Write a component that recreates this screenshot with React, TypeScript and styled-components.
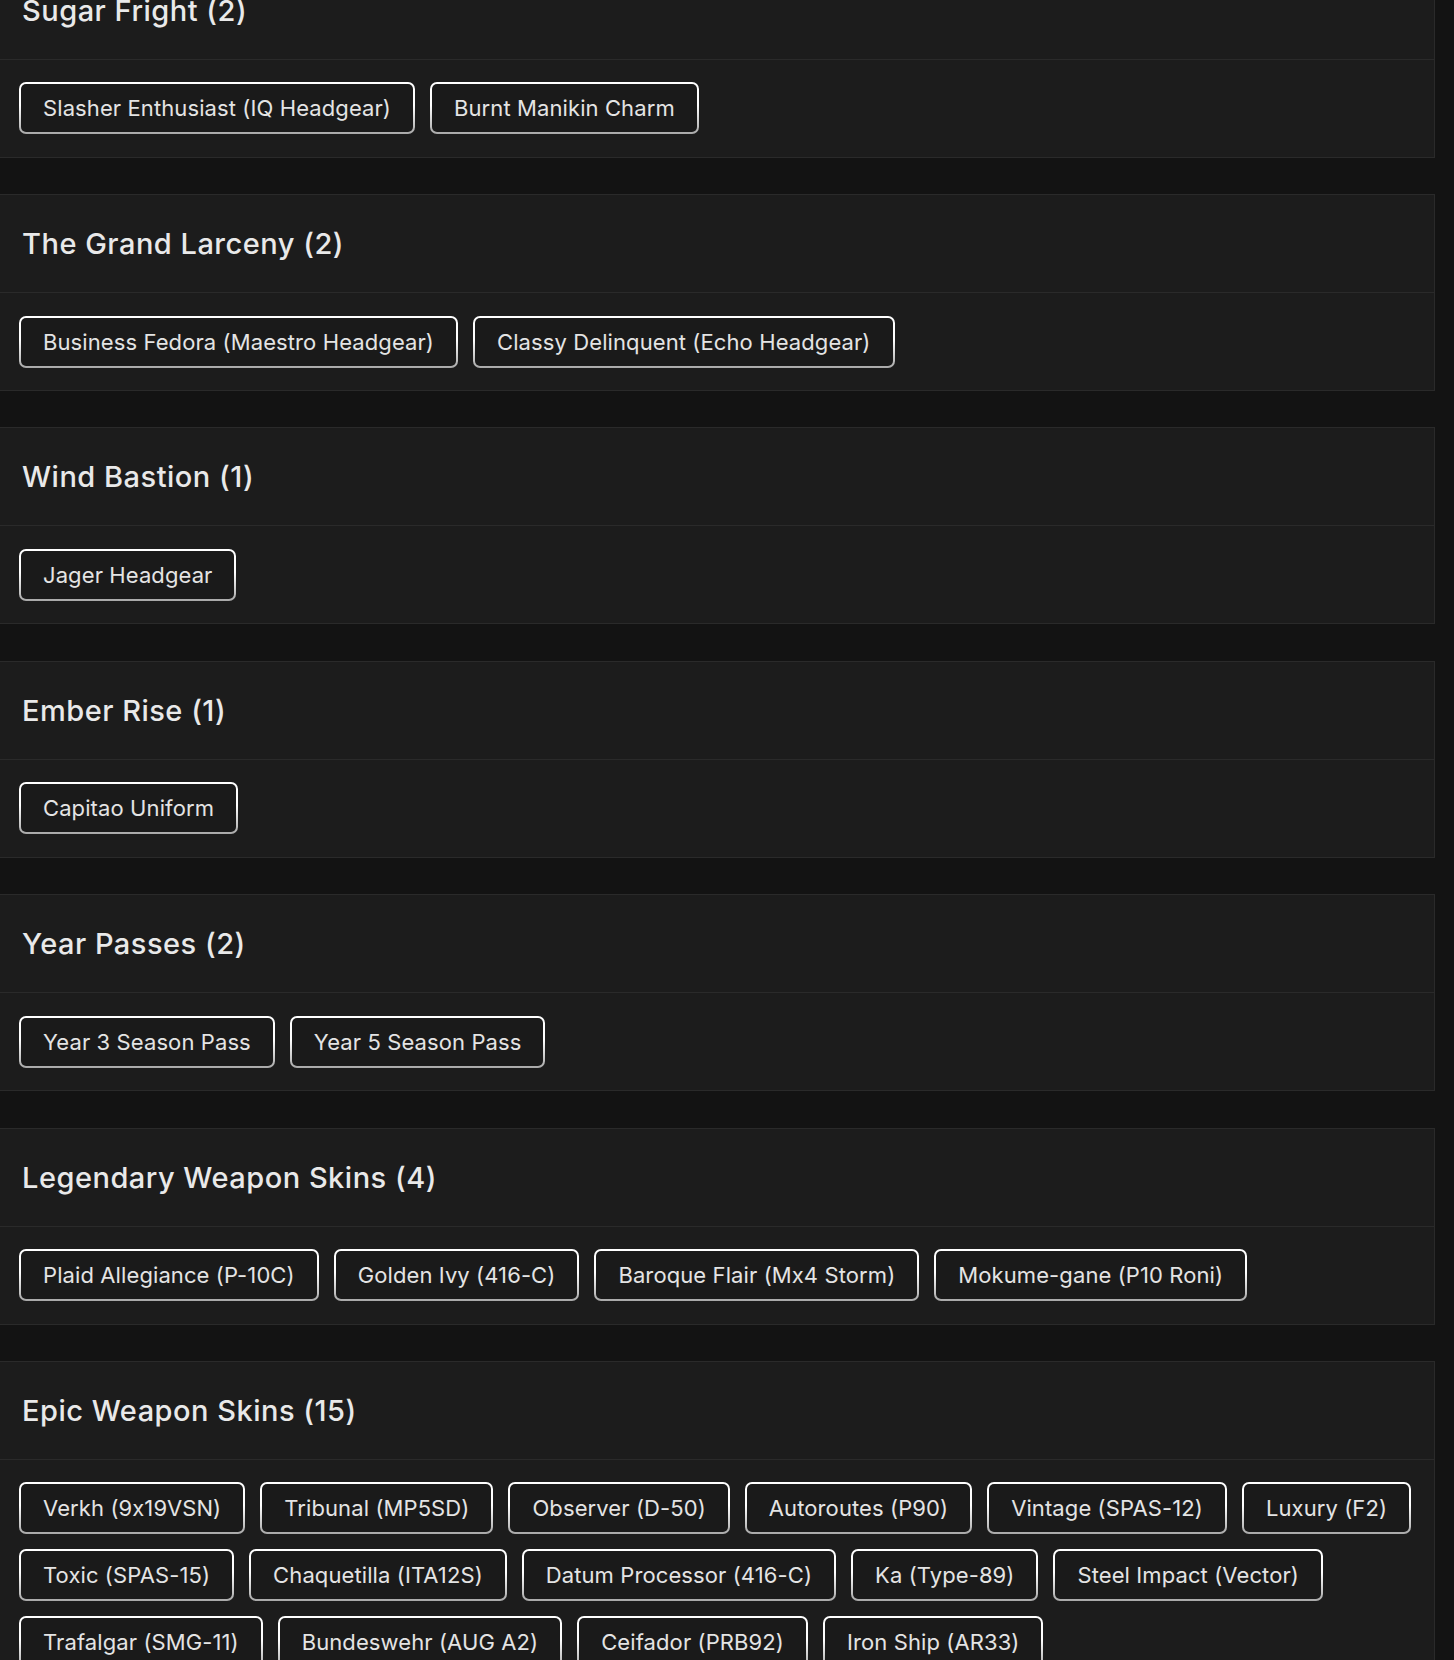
import React from "react";
import styled, { createGlobalStyle } from "styled-components";

const GlobalStyle = createGlobalStyle`
  html, body {
    margin: 0;
    padding: 0;
    background: #131313;
  }
  body {
    font-family: Inter, "Noto Sans", "Liberation Sans", sans-serif;
    color: #e6e6e6;
    overflow: hidden;
  }
  * { box-sizing: border-box; }
`;

const Page = styled.main`
  width: 1454px;
  height: 1660px;
  overflow: hidden;
  background: #131313;
`;

const CardList = styled.div`
  display: flex;
  flex-direction: column;
  gap: 36.4px;
  margin: -39.4px 19.5px 0 -1px;
`;

const Card = styled.section`
  background: #1c1c1c;
  border: 1px solid #2a2a2a;
  display: flex;
  flex-direction: column;
`;

const CardHeader = styled.header`
  height: 98px;
  padding: 0 22px;
  display: flex;
  align-items: center;
  border-bottom: 1px solid #2a2a2a;
`;

const Title = styled.h3`
  margin: 0;
  font-size: 29px;
  font-weight: 500;
  color: #e9e9e9;
  letter-spacing: 0.5px;
`;

const CardBody = styled.div`
  padding: 22.5px 18px 22.5px 19px;
  display: flex;
  flex-wrap: wrap;
  gap: 15px 15px;
`;

const ItemButton = styled.button`
  height: 52px;
  padding: 0 22px;
  border: 2px solid transparent;
  border-radius: 7px;
  background:
    linear-gradient(#1a1a1a, #1a1a1a) padding-box,
    linear-gradient(#ffffff, #ffffff 45%, #a8a8a8) border-box;
  color: #e4e4e4;
  font-family: Inter, "Noto Sans", "Liberation Sans", sans-serif;
  font-size: 22px;
  font-weight: 400;
  letter-spacing: 0.1px;
  line-height: 1;
  cursor: pointer;
  white-space: nowrap;
`;

type Group = { name: string; items: string[] };

const groups: Group[] = [
  { name: "Sugar Fright", items: ["Slasher Enthusiast (IQ Headgear)", "Burnt Manikin Charm"] },
  {
    name: "The Grand Larceny",
    items: ["Business Fedora (Maestro Headgear)", "Classy Delinquent (Echo Headgear)"],
  },
  { name: "Wind Bastion", items: ["Jager Headgear"] },
  { name: "Ember Rise", items: ["Capitao Uniform"] },
  { name: "Year Passes", items: ["Year 3 Season Pass", "Year 5 Season Pass"] },
  {
    name: "Legendary Weapon Skins",
    items: [
      "Plaid Allegiance (P-10C)",
      "Golden Ivy (416-C)",
      "Baroque Flair (Mx4 Storm)",
      "Mokume-gane (P10 Roni)",
    ],
  },
  {
    name: "Epic Weapon Skins",
    items: [
      "Verkh (9x19VSN)",
      "Tribunal (MP5SD)",
      "Observer (D-50)",
      "Autoroutes (P90)",
      "Vintage (SPAS-12)",
      "Luxury (F2)",
      "Toxic (SPAS-15)",
      "Chaquetilla (ITA12S)",
      "Datum Processor (416-C)",
      "Ka (Type-89)",
      "Steel Impact (Vector)",
      "Trafalgar (SMG-11)",
      "Bundeswehr (AUG A2)",
      "Ceifador (PRB92)",
      "Iron Ship (AR33)",
    ],
  },
];

export default function App() {
  return (
    <Page>
      <GlobalStyle />
      <CardList>
        {groups.map((g) => (
          <Card key={g.name}>
            <CardHeader>
              <Title>
                {g.name} ({g.items.length})
              </Title>
            </CardHeader>
            <CardBody>
              {g.items.map((it) => (
                <ItemButton key={it} type="button">
                  {it}
                </ItemButton>
              ))}
            </CardBody>
          </Card>
        ))}
      </CardList>
    </Page>
  );
}
